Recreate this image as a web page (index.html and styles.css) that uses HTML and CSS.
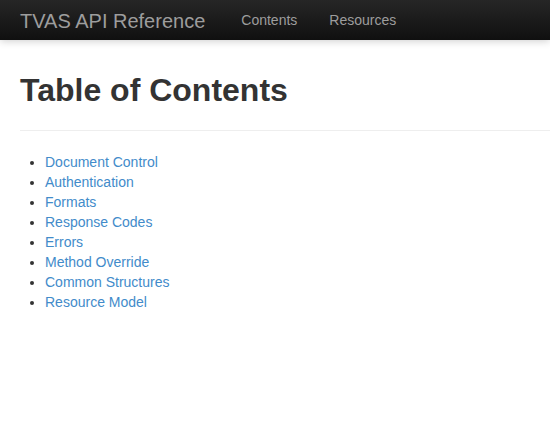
FILE: index.html
```html
<!DOCTYPE html>
<html>
<head>
<meta charset="utf-8">
<link rel="stylesheet" href="styles.css">
</head>
<body>
<nav class="navbar">
  <a class="brand" href="#">TVAS API Reference</a>
  <ul class="nav">
    <li><a href="#">Contents</a></li>
    <li><a href="#">Resources</a></li>
  </ul>
</nav>
<main class="content">
  <div class="page-header">
    <h1>Table of Contents</h1>
  </div>
  <ul class="toc">
    <li><a href="#">Document Control</a></li>
    <li><a href="#">Authentication</a></li>
    <li><a href="#">Formats</a></li>
    <li><a href="#">Response Codes</a></li>
    <li><a href="#">Errors</a></li>
    <li><a href="#">Method Override</a></li>
    <li><a href="#">Common Structures</a></li>
    <li><a href="#">Resource Model</a></li>
  </ul>
</main>
</body>
</html>
```
FILE: styles.css
```css
html, body {
  margin: 0;
  padding: 0;
  background: #fff;
  font-family: "Liberation Sans", Arial, Helvetica, sans-serif;
  font-size: 14px;
  line-height: 20px;
  color: #333;
}

.navbar {
  height: 40px;
  display: flex;
  align-items: center;
  padding-left: 20px;
  background: linear-gradient(to bottom, #262626 0%, #101010 100%);
  box-shadow: 0 1px 8px rgba(0, 0, 0, 0.2);
  position: relative;
}

.brand {
  font-size: 20px;
  line-height: 20px;
  color: #9d9d9d;
  text-decoration: none;
  margin-right: 20px;
  padding-top: 1px;
}

.nav {
  list-style: none;
  margin: 0;
  padding: 0;
  display: flex;
}

.nav a {
  display: block;
  padding: 0 16px;
  color: #9d9d9d;
  text-decoration: none;
  font-size: 14px;
  line-height: 20px;
}

.content {
  padding-left: 20px;
}

.page-header {
  padding-top: 32px;
  padding-bottom: 9px;
  border-bottom: 1px solid #eee;
  margin-bottom: 21px;
}

.page-header h1 {
  margin: 0 0 13px;
  font-size: 32px;
  line-height: 36px;
  font-weight: bold;
  color: #333;
}

.toc {
  margin: 0;
  padding-left: 25px;
}

.toc a {
  color: #428bca;
  text-decoration: none;
}
```
